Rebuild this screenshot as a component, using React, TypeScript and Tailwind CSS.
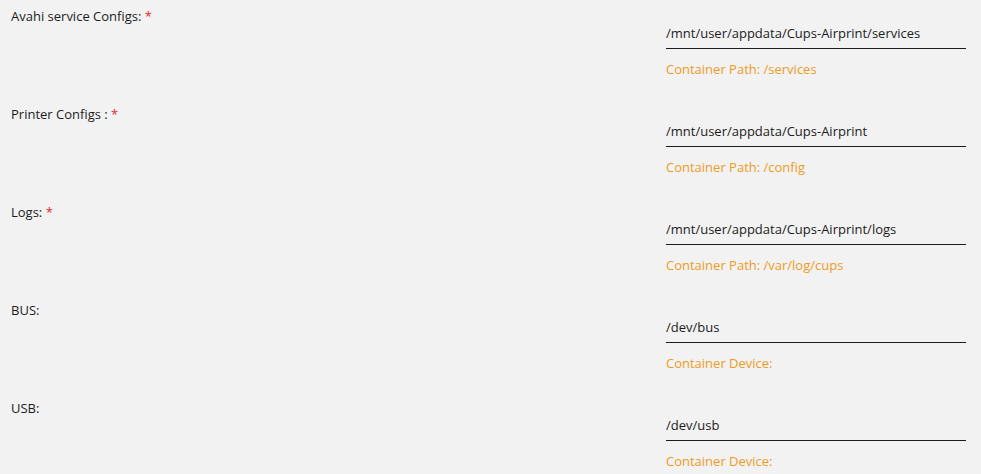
import React from 'react';

interface PathRow {
  label: string;
  required?: boolean;
  value: string;
  hint: string;
}

const rows: PathRow[] = [
  { label: 'Avahi service Configs:', required: true, value: '/mnt/user/appdata/Cups-Airprint/services', hint: 'Container Path: /services' },
  { label: 'Printer Configs :', required: true, value: '/mnt/user/appdata/Cups-Airprint', hint: 'Container Path: /config' },
  { label: 'Logs:', required: true, value: '/mnt/user/appdata/Cups-Airprint/logs', hint: 'Container Path: /var/log/cups' },
  { label: 'BUS:', value: '/dev/bus', hint: 'Container Device:' },
  { label: 'USB:', value: '/dev/usb', hint: 'Container Device:' },
];

const ConfigRow: React.FC<{ row: PathRow }> = ({ row }) => (
  <div className="flex h-[98px]">
    <div className="flex-1 pl-[11px] pt-[6px] text-[13px] leading-[20px] text-[#1c1c1c]">
      {row.label}
      {row.required && <span className="text-[#e22828]"> *</span>}
    </div>
    <div className="w-[300px] mr-[15px] pt-[20px]">
      <input
        type="text"
        defaultValue={row.value}
        className="w-full h-[26px] bg-transparent border-0 border-b border-[#1c1c1c] text-[13px] text-[#1c1c1c] outline-none p-0 pb-[5px]"
      />
      <div className="mt-[10px] text-[13px] leading-[20px] text-[#ee9b1e]">{row.hint}</div>
    </div>
  </div>
);

export default function App() {
  return (
    <div className="w-[981px] h-[474px] overflow-hidden bg-[#f2f2f2] font-['Open_Sans',sans-serif]">
      {rows.map((row) => (
        <ConfigRow key={row.label} row={row} />
      ))}
    </div>
  );
}
